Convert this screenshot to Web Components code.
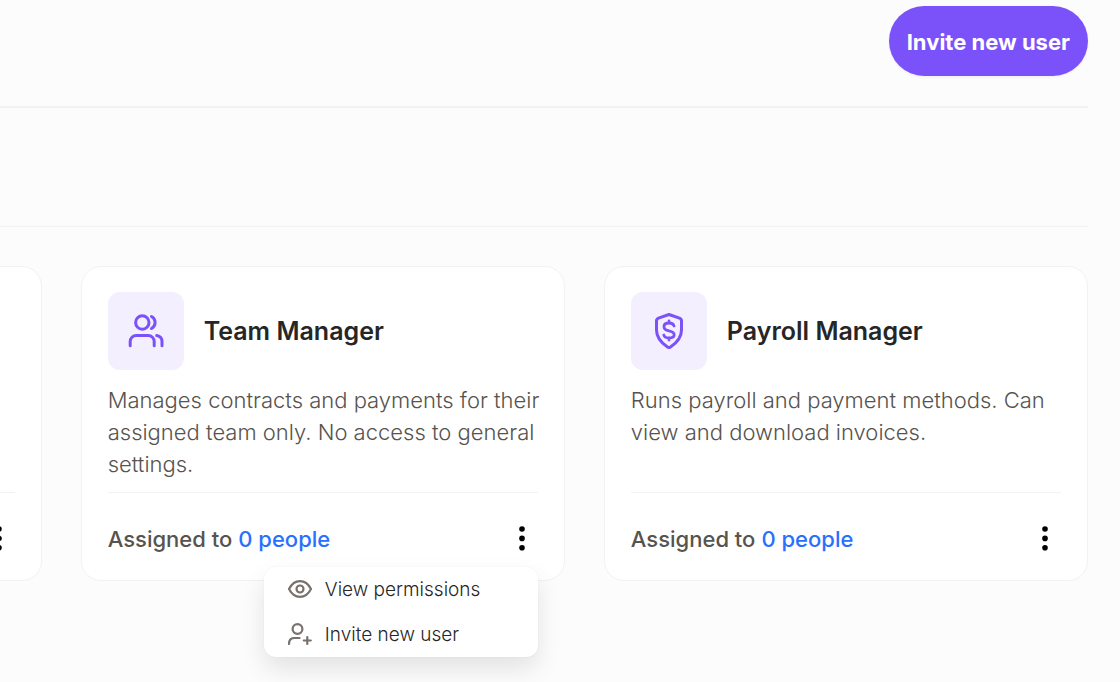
<!DOCTYPE html>
<html lang="en">
<head>
<meta charset="utf-8">
<title>Roles</title>
<style>
    body {
        margin: 0;
        background: #fcfcfc;
        color: #262626;
        font-family: Inter, "Liberation Sans", sans-serif;
    }
</style>
</head>
<body>
<roles-page>
    <pill-button slot="action">Invite new user</pill-button>
    <role-card></role-card>
    <role-card icon="users">
        <span slot="title">Team Manager</span>
        <span slot="description">Manages contracts and payments for their assigned team only. No access to general settings.</span>
        <people-count slot="assigned" count="0"></people-count>
        <role-menu slot="menu"></role-menu>
    </role-card>
    <role-card icon="shield">
        <span slot="title">Payroll Manager</span>
        <span slot="description">Runs payroll and payment methods. Can view and download invoices.</span>
        <people-count slot="assigned" count="0"></people-count>
    </role-card>
</roles-page>

<script>
const icons = {
    users: `
        <svg viewBox="0 0 36 36" width="36" height="36" fill="none" stroke="currentColor" stroke-width="3" stroke-linecap="round" stroke-linejoin="round">
            <circle cx="14.3" cy="9.500" r="6.700"/>
            <path d="M2.200 32.700v-4.200a6 6 0 0 1 6-6h12a6 6 0 0 1 6 6v4.200"/>
            <path d="M23.500 3.500a6.800 6.800 0 0 1 0 12"/>
            <path d="M28.700 22.500c3.500.7 5.300 2.700 5.300 6v4.200"/>
        </svg>`,
    shield: `
        <svg viewBox="0 0 36 36" width="36" height="36" fill="none" stroke="currentColor" stroke-width="3" stroke-linecap="round" stroke-linejoin="round">
            <path d="M18 1.500L28.500 5.200Q30.500 6 30.500 8v9c0 7.500-5 13-11 17q-1.500 1-3 0C10.500 30 5.500 24.500 5.500 17V8Q5.500 6 7.500 5.200z"/>
            <path d="M23 13c-.5-2-2-3-5-3s-5 1.300-5 3.700c0 2.600 2 3.500 5 4.200s5.200 1.400 5.200 3.900c0 2.200-2 3.200-5.200 3.200s-4.800-1-5.200-3M18 8v2M18 25v2" stroke-width="2.800"/>
        </svg>`,
    dots: `
        <svg viewBox="0 0 6 26" width="6" height="26" fill="currentColor">
            <circle cx="3" cy="3" r="2.800"/>
            <circle cx="3" cy="12.400" r="2.800"/>
            <circle cx="3" cy="21.800" r="2.800"/>
        </svg>`,
    eye: `
        <svg viewBox="0 0 24 24" width="24" height="24" fill="none" stroke="currentColor" stroke-width="2.200" stroke-linecap="round" stroke-linejoin="round">
            <path d="M1 11C6.500 .5 17.500 .5 23 11C17.500 21.500 6.500 21.500 1 11z"/>
            <circle cx="12" cy="11" r="3.500"/>
        </svg>`,
    invite: `
        <svg viewBox="0 0 24 24" width="24" height="24" fill="none" stroke="currentColor" stroke-width="2.200" stroke-linecap="round" stroke-linejoin="round">
            <circle cx="9.500" cy="6" r="4.900"/>
            <path d="M1 21c0-4 2-6 5.500-6h5M19.300 14v7M15.800 17.500h7"/>
        </svg>`
};

class RolesPage extends HTMLElement {
    constructor() {
        super();
        this.attachShadow({ mode: 'open' });
        this.shadowRoot.innerHTML = `
            <style>
                :host {
                    display: block;
                    min-height: 100vh;
                    overflow: hidden;
                    box-sizing: border-box;
                    padding-right: 32px;
                }
                header {
                    display: flex;
                    justify-content: flex-end;
                    padding: 6px 0 30px;
                    border-bottom: 2px solid #f2f2f2;
                }
                .filters {
                    height: 118px;
                    border-bottom: 1px solid #f2f2f2;
                }
                .cards {
                    display: flex;
                    justify-content: flex-end;
                    gap: 39px;
                    padding-top: 39px;
                }
            </style>
            <header><slot name="action"></slot></header>
            <div class="filters"></div>
            <main class="cards"><slot></slot></main>
        `;
    }
}

class PillButton extends HTMLElement {
    constructor() {
        super();
        this.attachShadow({ mode: 'open' });
        this.shadowRoot.innerHTML = `
            <style>
                :host { display: block; }
                button {
                    height: 70px;
                    padding: 2px 18px 0;
                    border: 0;
                    border-radius: 35px;
                    background: #7b52fa;
                    box-shadow: 0 1px 3px rgba(0, 0, 0, .06);
                    color: #fff;
                    font: 700 22px/32px Inter, "Liberation Sans", sans-serif;
                    cursor: pointer;
                }
            </style>
            <button type="button"><slot></slot></button>
        `;
    }
}

class RoleCard extends HTMLElement {
    constructor() {
        super();
        this.attachShadow({ mode: 'open' });
        this.shadowRoot.innerHTML = `
            <style>
                :host {
                    display: block;
                    flex: 0 0 44.5%;
                    box-sizing: border-box;
                    padding: 25px 26px;
                    border: 1px solid #f2f2f2;
                    border-radius: 20px;
                    background: #fff;
                }
                .head {
                    display: flex;
                    align-items: center;
                    gap: 20px;
                }
                .tile {
                    display: flex;
                    align-items: center;
                    justify-content: center;
                    width: 76px; height: 78px;
                    border-radius: 12px;
                    background: #f3efff;
                    color: #7b52fa;
                }
                h2 {
                    margin: 0;
                    font-size: 25px; line-height: 32px;
                    font-weight: 600;
                }
                p {
                    margin: 14px -8px 12px 0;
                    min-height: 96px;
                    color: #57534e;
                    font-size: 22px; line-height: 32px;
                    font-weight: 300;
                }
                footer {
                    position: relative;
                    display: flex;
                    align-items: center;
                    justify-content: space-between;
                    padding-top: 30px;
                    border-top: 1px solid #f2f2f2;
                }
                button {
                    display: flex;
                    align-items: center;
                    justify-content: center;
                    width: 32px; height: 32px;
                    margin-left: auto;
                    padding: 0;
                    border: 0;
                    background: none;
                    color: #000;
                    cursor: pointer;
                }
                slot[name="menu"] {
                    display: block;
                    position: absolute;
                    top: calc(100% + 12px);
                    right: 0;
                }
            </style>
            <div class="head">
                <div class="tile"></div>
                <h2><slot name="title"></slot></h2>
            </div>
            <p><slot name="description"></slot></p>
            <footer>
                <slot name="assigned"></slot>
                <button type="button" aria-label="Role actions">${icons.dots}</button>
                <slot name="menu"></slot>
            </footer>
        `;
    }
    connectedCallback() {
        const icon = this.getAttribute('icon');
        if (icon) {
            this.shadowRoot.querySelector('.tile').innerHTML = icons[icon];
        }
    }
}

class PeopleCount extends HTMLElement {
    constructor() {
        super();
        this.attachShadow({ mode: 'open' });
        this.shadowRoot.innerHTML = `
            <style>
                :host {
                    display: flex;
                    gap: 6px;
                    color: #57534e;
                    font-size: 22px; line-height: 32px;
                    font-weight: 500;
                }
                a {
                    color: #2970ff;
                    text-decoration: none;
                }
            </style>
            <span>Assigned to</span>
            <a href="#people"></a>
        `;
    }
    connectedCallback() {
        this.shadowRoot.querySelector('a').textContent = this.getAttribute('count') + ' people';
    }
}

class RoleMenu extends HTMLElement {
    constructor() {
        super();
        this.attachShadow({ mode: 'open' });
        this.shadowRoot.innerHTML = `
            <style>
                :host {
                    display: block;
                    box-sizing: border-box;
                    width: 274px;
                    border-radius: 12px;
                    background: #fff;
                    box-shadow: 0 0 2px rgba(0, 0, 0, .06), 0 12px 24px rgba(0, 0, 0, .1);
                }
                button {
                    display: flex;
                    align-items: center;
                    gap: 13px;
                    width: 100%; height: 45px;
                    padding: 0 24px;
                    border: 0;
                    background: none;
                    color: #262626;
                    font: 300 19px/24px Inter, "Liberation Sans", sans-serif;
                    cursor: pointer;
                }
                svg { color: #78716c; }
            </style>
            <button type="button">${icons.eye}<span>View permissions</span></button>
            <button type="button">${icons.invite}<span>Invite new user</span></button>
        `;
    }
}

customElements.define('roles-page', RolesPage);
customElements.define('pill-button', PillButton);
customElements.define('role-card', RoleCard);
customElements.define('people-count', PeopleCount);
customElements.define('role-menu', RoleMenu);
</script>
</body>
</html>
